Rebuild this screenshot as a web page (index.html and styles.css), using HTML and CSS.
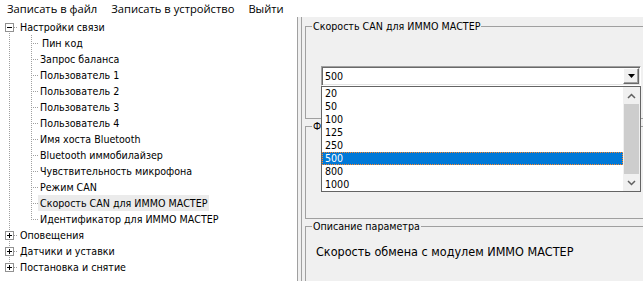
FILE: index.html
```html
<!DOCTYPE html>
<html lang="ru">
<head>
    <meta charset="UTF-8">
    <title>Настройки</title>
    <link rel="stylesheet" href="styles.css">
</head>
<body>
    <div class="menu">
        <span class="menu-item">Записать в файл</span>
        <span class="menu-item">Записать в устройство</span>
        <span class="menu-item">Выйти</span>
    </div>
    <div class="main">
        <ul class="tree">
            <li>
                <div class="row">
                    <svg class="exp" width="9" height="9"><rect x="0.5" y="0.5" width="8" height="8" fill="#fff" stroke="#919191"/><path d="M2 4.5h5" stroke="#000"/></svg>
                    <span class="hline"></span>
                    <span class="label">Настройки связи</span>
                </div>
                <ul class="children">
                    <li class="row"><span class="elbow"></span><span class="label label-pin">Пин код</span></li>
                    <li class="row"><span class="elbow"></span><span class="label">Запрос баланса</span></li>
                    <li class="row"><span class="elbow"></span><span class="label">Пользователь 1</span></li>
                    <li class="row"><span class="elbow"></span><span class="label">Пользователь 2</span></li>
                    <li class="row"><span class="elbow"></span><span class="label">Пользователь 3</span></li>
                    <li class="row"><span class="elbow"></span><span class="label">Пользователь 4</span></li>
                    <li class="row"><span class="elbow"></span><span class="label">Имя хоста Bluetooth</span></li>
                    <li class="row"><span class="elbow"></span><span class="label">Bluetooth иммобилайзер</span></li>
                    <li class="row"><span class="elbow"></span><span class="label">Чувствительность микрофона</span></li>
                    <li class="row"><span class="elbow"></span><span class="label">Режим CAN</span></li>
                    <li class="row"><span class="elbow"></span><span class="label selected">Скорость CAN для ИММО МАСТЕР</span></li>
                    <li class="row last"><span class="elbow"></span><span class="label">Идентификатор для ИММО МАСТЕР</span></li>
                </ul>
            </li>
            <li>
                <div class="row">
                    <svg class="exp" width="9" height="9"><rect x="0.5" y="0.5" width="8" height="8" fill="#fff" stroke="#919191"/><path d="M2 4.5h5M4.5 2v5" stroke="#000"/></svg>
                    <span class="hline"></span>
                    <span class="label">Оповещения</span>
                </div>
            </li>
            <li>
                <div class="row">
                    <svg class="exp" width="9" height="9"><rect x="0.5" y="0.5" width="8" height="8" fill="#fff" stroke="#919191"/><path d="M2 4.5h5M4.5 2v5" stroke="#000"/></svg>
                    <span class="hline"></span>
                    <span class="label">Датчики и уставки</span>
                </div>
            </li>
            <li>
                <div class="row">
                    <svg class="exp" width="9" height="9"><rect x="0.5" y="0.5" width="8" height="8" fill="#fff" stroke="#919191"/><path d="M2 4.5h5M4.5 2v5" stroke="#000"/></svg>
                    <span class="hline"></span>
                    <span class="label">Постановка и снятие</span>
                </div>
            </li>
        </ul>
        <div class="splitter"></div>
        <div class="panel">
            <fieldset class="group group-value">
                <legend>Скорость CAN для ИММО МАСТЕР</legend>
                <div class="combo">
                    <span class="combo-text">500</span>
                    <span class="combo-btn">
                        <svg width="7" height="4"><path d="M0 0h7L3.5 4z" fill="#000"/></svg>
                    </span>
                    <div class="combo-list">
                        <div class="options">
                            <div class="option">20</div>
                            <div class="option">50</div>
                            <div class="option">100</div>
                            <div class="option">125</div>
                            <div class="option">250</div>
                            <div class="option selected">500</div>
                            <div class="option">800</div>
                            <div class="option">1000</div>
                        </div>
                        <div class="scrollbar">
                            <div class="sb-btn">
                                <svg width="9" height="6"><path d="M1 5L4.5 1.5L8 5" fill="none" stroke="#606060" stroke-width="1.5"/></svg>
                            </div>
                            <div class="sb-thumb"></div>
                            <div class="sb-btn">
                                <svg width="9" height="6"><path d="M1 1L4.5 4.5L8 1" fill="none" stroke="#606060" stroke-width="1.5"/></svg>
                            </div>
                        </div>
                    </div>
                </div>
            </fieldset>
            <fieldset class="group group-format">
                <legend>Ф</legend>
            </fieldset>
            <fieldset class="group group-desc">
                <legend>Описание параметра</legend>
                <p class="desc">Скорость обмена с модулем ИММО МАСТЕР</p>
            </fieldset>
        </div>
    </div>
</body>
</html>
```

FILE: styles.css
```css
body {
    margin: 0;
    width: 643px;
    height: 281px;
    overflow: hidden;
    background: #fff;
    font-family: "DejaVu Sans Condensed", "DejaVu Sans", sans-serif;
    font-size: 10.6px;
    color: #000;
}

/* menu */

.menu {
    display: flex;
    height: 17px;
    background: #fff;
    font-family: "Open Sans", sans-serif;
    font-size: 11.2px;
    line-height: 17px;
}

.menu-item {
    padding: 0 7px;
}

.main {
    display: flex;
    height: 264px;
}

/* tree */

.tree {
    width: 297px;
    margin: 0;
    padding: 2px 0 0;
    list-style: none;
    box-sizing: border-box;
    background:
        repeating-linear-gradient(#a0a0a0 0 1px, transparent 1px 2px) 9px 10px / 1px 240px no-repeat,
        #fff;
}

.tree ul {
    margin: 0;
    padding: 0;
    list-style: none;
}

.row {
    display: flex;
    height: 16px;
    line-height: 16px;
    white-space: nowrap;
}

.exp {
    margin: 4px 0 0 5px;
    flex: none;
}

.hline {
    width: 4px;
    height: 16px;
    background: repeating-linear-gradient(to right, #a0a0a0 0 1px, transparent 1px 2px) 0 8px / 100% 1px no-repeat;
}

.elbow {
    width: 7px;
    height: 16px;
    margin-left: 31px;
    background:
        repeating-linear-gradient(#a0a0a0 0 1px, transparent 1px 2px) 0 0 / 1px 100% no-repeat,
        repeating-linear-gradient(to right, #a0a0a0 0 1px, transparent 1px 2px) 0 8px / 100% 1px no-repeat;
}

.last .elbow {
    background-size: 1px 9px, 100% 1px;
}

.label {
    padding: 0 2px;
}

.label-pin {
    padding-left: 4px;
}

.label.selected {
    background: #ebebeb;
}

/* splitter */

.splitter {
    width: 5px;
    box-sizing: border-box;
    border-left: 1px solid #a0a0a0;
    border-right: 1px solid #a0a0a0;
    background: #f0f0f0;
}

/* right panel */

.panel {
    flex: 1;
    overflow: hidden;
    background: #f0f0f0;
    padding: 2px 0 0 3px;
}

.group {
    margin: 0 -20px 0 0;
    padding: 0;
    min-width: 0;
    border: 1px solid #a0a0a0;
    box-sizing: border-box;
}

.group legend {
    margin-left: 6px;
    padding: 0 1px;
    line-height: 14px;
}

.group-value {
    height: 100px;
}

.group-format {
    height: 100px;
}

.group-desc {
    height: 80px;
}

.combo {
    position: relative;
    display: flex;
    width: 320px;
    height: 20px;
    margin: 33px 0 0 15px;
    box-sizing: border-box;
    border: 1px solid;
    border-color: #a0a0a0 #fff #fff #a0a0a0;
    box-shadow: inset 1px 1px #696969, inset -1px -1px #e3e3e3;
    background: #fff;
}

.combo-text {
    flex: 1;
    padding-left: 3px;
    line-height: 18px;
}

.combo-btn {
    display: flex;
    align-items: center;
    justify-content: center;
    width: 16px;
    height: 16px;
    margin: 1px 1px 0 0;
    box-sizing: border-box;
    border: 1px solid;
    border-color: #fff #696969 #696969 #fff;
    box-shadow: inset -1px -1px #a0a0a0;
    background: #f0f0f0;
}

.combo-list {
    position: absolute;
    top: calc(100% + 1px);
    left: -1px;
    display: flex;
    width: 320px;
    height: 106px;
    box-sizing: border-box;
    border: 1px solid #646464;
    background: #fff;
}

.options {
    flex: 1;
}

.option {
    height: 13px;
    line-height: 13px;
    padding-left: 3px;
}

.option.selected {
    background: #0078d7;
    color: #fff;
    outline: 1px dotted #ff8728;
    outline-offset: -1px;
}

.scrollbar {
    display: flex;
    flex-direction: column;
    width: 17px;
    background: #f0f0f0;
}

.sb-btn {
    display: flex;
    align-items: center;
    justify-content: center;
    height: 17px;
}

.sb-thumb {
    flex: 1;
    margin: 0 1px;
    background: #cdcdcd;
}

.desc {
    margin: 11px 0 0 10px;
    font-size: 12.5px;
    line-height: 16px;
}
```
